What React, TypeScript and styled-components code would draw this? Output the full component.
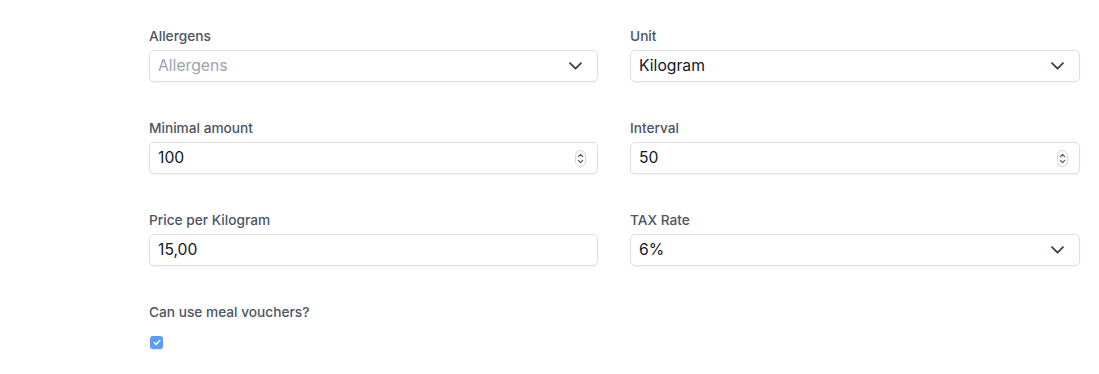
import React from "react";
import styled, { createGlobalStyle } from "styled-components";

const Global = createGlobalStyle`
  html, body { margin: 0; padding: 0; background: #ffffff; }
  body { font-family: Inter, "Noto Sans", "Liberation Sans", sans-serif; -webkit-font-smoothing: antialiased; }
  * { box-sizing: border-box; }
`;

const Page = styled.div`
  width: 1099px;
  height: 374px;
  padding: 26px 19px 0 149px;
  background: #fff;
`;

const Grid = styled.div`
  display: grid;
  grid-template-columns: 449px 450px;
  column-gap: 32px;
  row-gap: 36px;
`;

const Field = styled.div`
  display: flex;
  flex-direction: column;
`;

const Label = styled.label`
  font-size: 13.7px;
  line-height: 20px;
  font-weight: 500;
  color: #4b5563;
  margin-bottom: 4px;
`;

const Box = styled.div<{ $kind: "select" | "number" | "text" }>`
  position: relative;
  height: 32px;
  border: 1px solid #dcdfe4;
  border-radius: 5px;
  box-shadow: 0 1px 2px rgba(0, 0, 0, 0.06);
  background: #fff;
  display: flex;
  align-items: center;
  padding: 0 ${(p) => (p.$kind === "number" ? "11px" : "15px")} 0 8px;
`;

const Value = styled.span<{ $placeholder?: boolean }>`
  flex: 1;
  font-size: 15.7px;
  line-height: 20px;
  color: ${(p) => (p.$placeholder ? "#9ca3af" : "#111827")};
`;

const Chevron = () => (
  <svg width="13" height="8" viewBox="0 0 13 8" fill="none">
    <path d="M1 1.2L6.5 6.6L12 1.2" stroke="#374151" strokeWidth="1.8" strokeLinecap="round" strokeLinejoin="round" />
  </svg>
);

const Spinner = () => (
  <svg width="11" height="17" viewBox="0 0 11 17" fill="none">
    <rect x="0.5" y="0.5" width="10" height="16" rx="5" stroke="#d1d5db" strokeWidth="1" fill="#fff" />
    <path d="M3.3 6.6L5.5 4.4L7.7 6.6" stroke="#4b5563" strokeWidth="1.2" strokeLinecap="round" strokeLinejoin="round" />
    <path d="M3.3 10.4L5.5 12.6L7.7 10.4" stroke="#4b5563" strokeWidth="1.2" strokeLinecap="round" strokeLinejoin="round" />
  </svg>
);

const CheckRow = styled.div`
  grid-column: 1 / 2;
  display: flex;
  flex-direction: column;
`;

const CheckBox = styled.div`
  margin-top: 10px;
  margin-left: 1px;
  width: 13px;
  height: 13px;
  border-radius: 3px;
  background: #5b9cf6;
  box-shadow: 0 1px 2px rgba(0, 0, 0, 0.12);
  display: flex;
  align-items: center;
  justify-content: center;
`;

type Kind = "select" | "number" | "text";
type F = { label: string; value: string; kind: Kind; placeholder?: boolean };

const fields: F[] = [
  { label: "Allergens", value: "Allergens", kind: "select", placeholder: true },
  { label: "Unit", value: "Kilogram", kind: "select" },
  { label: "Minimal amount", value: "100", kind: "number" },
  { label: "Interval", value: "50", kind: "number" },
  { label: "Price per Kilogram", value: "15,00", kind: "text" },
  { label: "TAX Rate", value: "6%", kind: "select" },
];

export default function App() {
  return (
    <Page>
      <Global />
      <Grid>
        {fields.map((f) => (
          <Field key={f.label}>
            <Label>{f.label}</Label>
            <Box $kind={f.kind}>
              <Value $placeholder={f.placeholder}>{f.value}</Value>
              {f.kind === "select" && <Chevron />}
              {f.kind === "number" && <Spinner />}
            </Box>
          </Field>
        ))}
        <CheckRow>
          <Label>Can use meal vouchers?</Label>
          <CheckBox>
            <svg width="8" height="7" viewBox="0 0 8 7" fill="none">
              <path d="M1.2 3.6L3.1 5.4L6.8 1.5" stroke="#fff" strokeWidth="1.4" strokeLinecap="round" strokeLinejoin="round" />
            </svg>
          </CheckBox>
        </CheckRow>
      </Grid>
    </Page>
  );
}
